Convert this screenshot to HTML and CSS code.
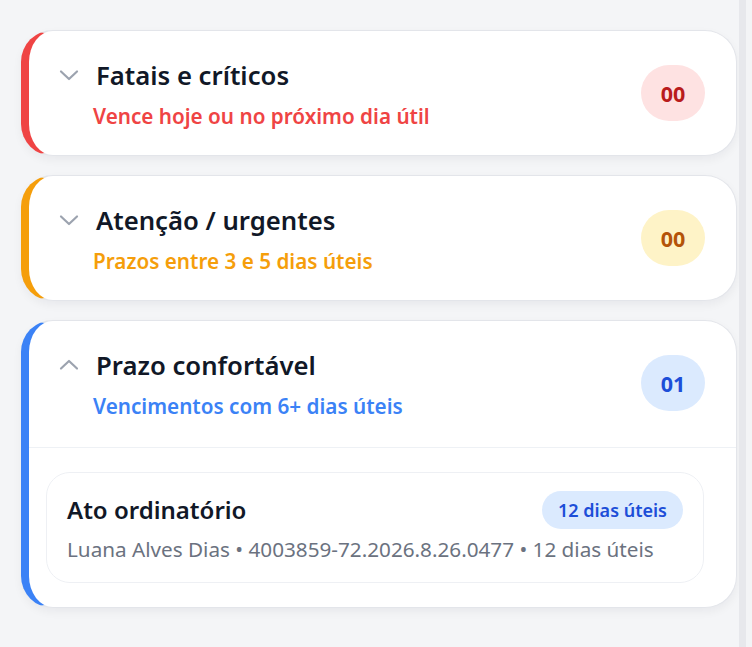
FILE: index.html
```html
<!DOCTYPE html>
<html lang="pt-BR">
<head>
<meta charset="utf-8">
<title>Prazos</title>
<link rel="stylesheet" href="styles.css">
</head>
<body>
<div class="page">
  <main class="main">
    <section class="group group-red">
      <div class="group-head">
        <div class="head-text">
          <div class="title-row">
            <svg class="chev" width="20" height="12" viewBox="0 0 20 12"><path d="M2 2.5 L10 10 L18 2.5" fill="none" stroke="currentColor" stroke-width="2.2" stroke-linecap="round" stroke-linejoin="round"/></svg>
            <h2 class="group-title">Fatais e críticos</h2>
          </div>
          <p class="group-sub">Vence hoje ou no próximo dia útil</p>
        </div>
        <span class="count">00</span>
      </div>
    </section>

    <section class="group group-amber">
      <div class="group-head">
        <div class="head-text">
          <div class="title-row">
            <svg class="chev" width="20" height="12" viewBox="0 0 20 12"><path d="M2 2.5 L10 10 L18 2.5" fill="none" stroke="currentColor" stroke-width="2.2" stroke-linecap="round" stroke-linejoin="round"/></svg>
            <h2 class="group-title">Atenção / urgentes</h2>
          </div>
          <p class="group-sub">Prazos entre 3 e 5 dias úteis</p>
        </div>
        <span class="count">00</span>
      </div>
    </section>

    <section class="group group-blue">
      <div class="group-head">
        <div class="head-text">
          <div class="title-row">
            <svg class="chev" width="20" height="12" viewBox="0 0 20 12"><path d="M2 9.5 L10 2 L18 9.5" fill="none" stroke="currentColor" stroke-width="2.2" stroke-linecap="round" stroke-linejoin="round"/></svg>
            <h2 class="group-title">Prazo confortável</h2>
          </div>
          <p class="group-sub">Vencimentos com 6+ dias úteis</p>
        </div>
        <span class="count">01</span>
      </div>
      <div class="group-body">
        <article class="item">
          <div class="item-top">
            <h3 class="item-title">Ato ordinatório</h3>
            <span class="pill">12 dias úteis</span>
          </div>
          <p class="item-meta">Luana Alves Dias • 4003859-72.2026.8.26.0477 • 12 dias úteis</p>
        </article>
      </div>
    </section>
  </main>
  <div class="scroll"></div>
</div>
</body>
</html>
```

FILE: styles.css
```css
* { box-sizing: border-box; }
html, body { margin: 0; padding: 0; }
body {
  background: #f4f5f7;
  font-family: "Noto Sans", "Open Sans", sans-serif;
  color: #111827;
}
.page {
  display: flex;
  min-height: 647px;
}
.main {
  flex: 1;
  padding: 30px 2px 0 21px;
  display: flex;
  flex-direction: column;
  gap: 19px;
}
.scroll {
  width: 13px;
  background: #f3f4f6;
  border-left: 7px solid #e7e8ec;
}
.group {
  background: #ffffff;
  border: 1px solid #e3e5ea;
  border-left-width: 8px;
  border-radius: 32px;
  box-shadow: 0 4px 10px rgba(17, 24, 39, 0.05);
  overflow: hidden;
}
.group-red { border-left-color: #ef4444; }
.group-amber { border-left-color: #f59e0b; }
.group-blue { border-left-color: #3b82f6; }

.group-head {
  height: 124px;
  display: flex;
  align-items: center;
  justify-content: space-between;
  padding: 0 31px 0 30px;
}
.head-text {
  display: flex;
  flex-direction: column;
  gap: 10px;
  margin-top: 4px;
}
.title-row {
  display: flex;
  align-items: center;
  gap: 17px;
}
.chev {
  color: #9ca3af;
  display: block;
  margin-top: -3px;
}
.group-title {
  margin: 0;
  font-size: 25.7px;
  line-height: 32px;
  font-weight: 600;
  color: #111827;
}
.group-sub {
  margin: 0 0 0 34px;
  font-size: 20.7px;
  line-height: 28px;
  font-weight: 600;
}
.group-red .group-sub { color: #ef4444; }
.group-amber .group-sub { color: #f59e0b; }
.group-blue .group-sub { color: #3b82f6; }

.count {
  width: 64px;
  height: 56px;
  border-radius: 28px;
  display: flex;
  align-items: center;
  justify-content: center;
  font-size: 21.5px;
  font-weight: 700;
}
.group-red .count { background: #fee2e2; color: #b91c1c; }
.group-amber .count { background: #fef3c7; color: #b45309; }
.group-blue .count { background: #dbeafe; color: #1d4ed8; }

.group-body {
  margin-top: 2px;
  border-top: 1px solid #eef1f5;
  padding: 24px 32px 24px 17px;
}
.item {
  border: 1.5px solid #eef0f4;
  border-radius: 24px;
  padding: 18px 20px 20px 20px;
  display: flex;
  flex-direction: column;
  gap: 7px;
}
.item-top {
  display: flex;
  align-items: center;
  justify-content: space-between;
}
.item-title {
  margin: 0;
  font-size: 24px;
  line-height: 38px;
  font-weight: 600;
  color: #111827;
}
.pill {
  height: 38px;
  padding: 0 16px;
  border-radius: 19px;
  background: #dbeafe;
  color: #1d4ed8;
  font-size: 18px;
  font-weight: 600;
  display: flex;
  align-items: center;
}
.item-meta {
  margin: 0;
  font-size: 20.7px;
  line-height: 26px;
  color: #6b7280;
}
```
